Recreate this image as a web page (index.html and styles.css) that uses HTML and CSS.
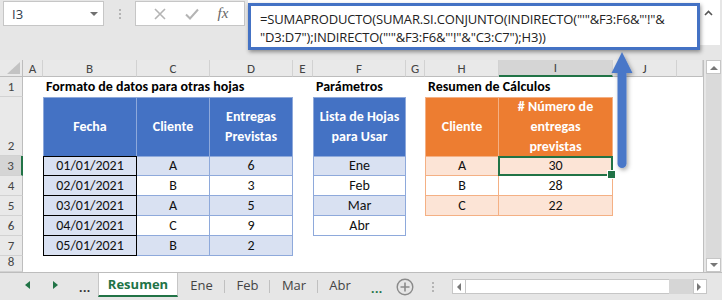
FILE: index.html
```html
<!DOCTYPE html>
<html lang="es">
<head>
<meta charset="utf-8">
<title>Excel - Resumen</title>
<link rel="stylesheet" href="styles.css">
</head>
<body>
<div class="fbar">
  <div class="namebox"><span>I3</span><i class="caret"></i></div>
  <div class="vdots"><i></i><i></i><i></i></div>
  <div class="fxbox">
    <svg width="12" height="12" viewBox="0 0 12 12"><path d="M1 1L11 11M11 1L1 11" stroke="#b4b4b4" stroke-width="1.6" fill="none"/></svg>
    <svg width="14" height="12" viewBox="0 0 14 12"><path d="M1 6.5L5 10.5L13 1.5" stroke="#b4b4b4" stroke-width="2" fill="none"/></svg>
    <span class="fx">fx</span>
  </div>
  <div class="formula">
    <div class="hl">=SUMAPRODUCTO(SUMAR.SI.CONJUNTO(INDIRECTO("'"&amp;F3:F6&amp;"'!"&amp;<br>"D3:D7");INDIRECTO("'"&amp;F3:F6&amp;"'!"&amp;"C3:C7");H3))</div>
    <svg class="up" width="9" height="6" viewBox="0 0 9 6"><path d="M1 5L4.5 1.5L8 5" stroke="#555" stroke-width="1.6" fill="none"/></svg>
  </div>
</div>

<div class="main">
  <div class="sheet">
    <div class="corner"><i></i></div>
    <div class="ch">A</div><div class="ch">B</div><div class="ch">C</div><div class="ch">D</div><div class="ch">E</div><div class="ch">F</div><div class="ch">G</div><div class="ch">H</div><div class="ch hsel">I</div><div class="ch">J</div><div class="ch"></div>

    <div class="rh">1</div><div></div><div class="title">Formato de datos para otras hojas</div><div></div><div></div><div></div><div class="title">Parámetros</div><div></div><div class="title">Resumen de Cálculos</div><div></div><div></div><div></div>

    <div class="rh">2</div><div></div>
    <div class="cell blue hd l">Fecha</div>
    <div class="cell blue hd">Cliente</div>
    <div class="cell blue hd">Entregas<br>Previstas</div>
    <div></div>
    <div class="cell blue hd l">Lista de Hojas<br>para Usar</div>
    <div></div>
    <div class="cell org hd l">Cliente</div>
    <div class="cell org hd"># Número de<br>entregas<br>previstas</div>
    <div></div><div></div>

    <div class="rh rsel">3</div><div></div>
    <div class="cell date first">01/01/2021</div>
    <div class="cell blue f tp">A</div>
    <div class="cell blue f tp">6</div>
    <div></div>
    <div class="cell blue f l tp">Ene</div>
    <div></div>
    <div class="cell org f l tp">A</div>
    <div class="cell org f tp sel">30</div>
    <div></div><div></div>

    <div class="rh">4</div><div></div>
    <div class="cell date">02/01/2021</div>
    <div class="cell blue">B</div>
    <div class="cell blue">3</div>
    <div></div>
    <div class="cell blue l">Feb</div>
    <div></div>
    <div class="cell org l">B</div>
    <div class="cell org">28</div>
    <div></div><div></div>

    <div class="rh">5</div><div></div>
    <div class="cell date">03/01/2021</div>
    <div class="cell blue f">A</div>
    <div class="cell blue f">5</div>
    <div></div>
    <div class="cell blue f l">Mar</div>
    <div></div>
    <div class="cell org f l">C</div>
    <div class="cell org f">22</div>
    <div></div><div></div>

    <div class="rh">6</div><div></div>
    <div class="cell date">04/01/2021</div>
    <div class="cell blue">C</div>
    <div class="cell blue">9</div>
    <div></div>
    <div class="cell blue l">Abr</div>
    <div></div><div></div><div></div><div></div><div></div>

    <div class="rh">7</div><div></div>
    <div class="cell date">05/01/2021</div>
    <div class="cell blue f">B</div>
    <div class="cell blue f">2</div>
    <div></div><div></div><div></div><div></div><div></div><div></div><div></div>

    <div class="rh">8</div><div></div><div></div><div></div><div></div><div></div><div></div><div></div><div></div><div></div><div></div><div></div>
  </div>
  <div class="vscroll">
    <div class="sbtn"><svg width="8" height="5" viewBox="0 0 8 5"><path d="M0 5L4 1L8 5Z" fill="#777"/></svg></div>
    <div class="strack"></div>
    <div class="sbtn"><svg width="8" height="5" viewBox="0 0 8 5"><path d="M0 0L4 4L8 0Z" fill="#777"/></svg></div>
  </div>
</div>

<div class="tabs">
  <div class="nav">
    <svg class="nl" width="5" height="8" viewBox="0 0 5 8"><path d="M5 0L0 4L5 8Z" fill="#217346"/></svg>
    <svg class="nr" width="5" height="8" viewBox="0 0 5 8"><path d="M0 0L5 4L0 8Z" fill="#217346"/></svg>
    <span class="more dark">...</span>
  </div>
  <div class="tab active">Resumen</div>
  <div class="tab w47 sep">Ene</div>
  <div class="tab w45 sep">Feb</div>
  <div class="tab w48 sep">Mar</div>
  <div class="tab w44">Abr</div>
  <span class="more green">...</span>
  <svg class="plus" width="18" height="18" viewBox="0 0 18 18"><circle cx="9" cy="9" r="7.8" stroke="#8a8a8a" stroke-width="1.4" fill="none"/><path d="M9 4.5V13.5M4.5 9H13.5" stroke="#8a8a8a" stroke-width="1.6"/></svg>
  <div class="vdots tabdots"><i></i><i></i><i></i></div>
  <div class="hscroll">
    <div class="hbtn"><svg width="5" height="8" viewBox="0 0 5 8"><path d="M5 0L1 4L5 8Z" fill="#777"/></svg></div>
    <div class="thumb"></div>
    <div class="htrack"></div>
    <div class="hbtn"><svg width="5" height="8" viewBox="0 0 5 8"><path d="M0 0L4 4L0 8Z" fill="#777"/></svg></div>
  </div>
</div>

<svg class="arrow" width="40" height="130" viewBox="0 0 40 130">
  <defs><filter id="sh" x="-50%" y="-20%" width="200%" height="140%"><feDropShadow dx="1.5" dy="2" stdDeviation="2" flood-color="#000" flood-opacity="0.35"/></filter></defs>
  <g filter="url(#sh)" fill="#4a77c8">
    <path d="M22 4L32.5 25H11.5Z"/>
    <path d="M17.5 24H26.5V115.5A4.5 4.5 0 0 1 17.5 115.5Z"/>
  </g>
</svg>
</body>
</html>
```

FILE: styles.css
```css
* { box-sizing: border-box; }
html, body { margin: 0; padding: 0; }
body {
  width: 722px;
  height: 300px;
  overflow: hidden;
  position: relative;
  background: #e6e6e6;
  font-family: "Open Sans", "Liberation Sans", sans-serif;
  color: #222;
}

/* formula bar */
.fbar { display: flex; align-items: flex-start; height: 60px; }
.namebox {
  margin: 1px 0 0 3px; width: 101px; height: 25px;
  background: #fff; border: 1px solid #c6c6c6;
  display: flex; align-items: center; justify-content: space-between;
  padding: 0 5px 0 8px; font-size: 13px; color: #2f3b4c;
}
.caret { border-left: 4px solid transparent; border-right: 4px solid transparent; border-top: 4px solid #707070; }
.vdots { width: 31px; display: flex; flex-direction: column; align-items: center; gap: 2px; padding-top: 9px; }
.vdots i { width: 2px; height: 2px; background: #b4b4b4; display: block; }
.fxbox {
  margin-top: 1px; width: 110px; height: 25px; background: #fff; border: 1px solid #c6c6c6;
  display: flex; align-items: center; justify-content: space-around; padding: 0 6px 0 8px;
}
.fx { font-family: "Liberation Serif", serif; font-style: italic; font-size: 15px; color: #666; }
.formula { margin-left: 3px; width: 472px; height: 45px; background: #fff; position: relative; }
.formula .hl {
  position: absolute; left: 0; top: 3px; width: 452px; height: 47px; z-index: 2;
  border: 3px solid #4472c4; background: #fff;
  box-shadow: 1px 2px 4px rgba(0,0,0,0.4);
  padding: 4px 0 0 9px; font-size: 13px; line-height: 18px; white-space: nowrap; color: #222;
  font-family: "Open Sans", "Liberation Sans", sans-serif; letter-spacing: -0.15px;
}
.formula .up { position: absolute; right: 7px; top: 10px; }

/* sheet */
.main { display: flex; height: 212px; }
.sheet {
  width: 704px; height: 212px; background: #fff; border-right: 1px solid #bfbfbf;
  display: grid;
  grid-template-columns: 23px 20px 94px 73px 83px 20px 93px 19px 74px 114px 64px 26px;
  grid-template-rows: 17px 20px 59px 20px 20px 20px 20px 20px 16px;
  font-family: "Carlito", "Lato", sans-serif; font-size: 14px;
}
.corner { background: #e9e9e9; border-right: 1px solid #bdbdbd; border-bottom: 1px solid #bdbdbd; position: relative; }
.corner i { position: absolute; right: 2px; bottom: 2px; width: 0; height: 0; border-left: 13px solid transparent; border-bottom: 12px solid #c3c3c3; }
.ch {
  background: #e9e9e9; border-right: 1px solid #d2d2d2; border-bottom: 1px solid #bdbdbd;
  display: flex; align-items: center; justify-content: center; font-size: 13px; color: #444;
}
.hsel { background: #d5d5d5; border-bottom: 2px solid #217346; }
.rh {
  background: #e9e9e9; border-right: 1px solid #bdbdbd; border-bottom: 1px solid #d2d2d2;
  display: flex; align-items: flex-end; justify-content: center; font-size: 13px; color: #444; line-height: 18px;
}
.rsel { background: #d5d5d5; border-right: 2px solid #217346; }
.title {
  white-space: nowrap; font-weight: 700; display: flex; align-items: flex-end;
  padding: 0 0 1px 3px; color: #000; line-height: 18px;
}
.cell {
  display: flex; align-items: center; justify-content: center; text-align: center;
  line-height: 20px; color: #111;
  border-right: 1px solid var(--bc); border-bottom: 1px solid var(--bc);
}
.blue { --bc: #8ea9db; }
.org { --bc: #f4b084; }
.cell.l { border-left: 1px solid var(--bc); }
.cell.tp { border-top: 1px solid var(--bc); }
.cell.hd { border-top: 1px solid var(--bc); border-bottom: none; font-weight: 700; color: #fff; }
.blue.hd { background: #4472c4; }
.org.hd { background: #ed7d31; }
.blue.f { background: #d9e1f2; }
.org.f { background: #fce4d6; }
.cell.date { border: 1px solid #000; border-top: none; background: #d9e1f2; }
.cell.date.first { border-top: 1px solid #000; }
.sel { position: relative; }
.sel::after {
  content: ""; position: absolute; left: -1px; top: -1px; right: -1px; bottom: -1px;
  border: 2px solid #217346;
}
.sel::before {
  content: ""; position: absolute; right: -4px; bottom: -4px; width: 7px; height: 7px; z-index: 1;
  background: #217346; border: 1px solid #fff;
}

.vscroll { margin-left: 2px; width: 15px; display: flex; flex-direction: column; }
.sbtn { height: 14px; background: #fff; border: 1px solid #c6c6c6; display: flex; align-items: center; justify-content: center; }
.strack { flex: 1; background: #dadada; }

/* tabs */
.tabs {
  display: flex; align-items: flex-start; height: 28px; border-top: 1px solid #bdbdbd;
  font-family: "Open Sans", "Liberation Sans", sans-serif; font-size: 13px; color: #444;
}
.nav { width: 98px; height: 24px; display: flex; align-items: center; }
.nav .nl { margin-left: 25px; }
.nav .nr { margin-left: 23px; }
.more { font-weight: 700; letter-spacing: 0.5px; font-size: 12px; }
.more.dark { margin-left: 21px; color: #333; padding-top: 4px; }
.more.green { margin: 7px 0 0 9px; color: #217346; }
.tab { height: 24px; display: flex; align-items: center; justify-content: center; position: relative; }
.tab.active {
  width: 80px; background: #fff; color: #217346; font-weight: 700;
  border-left: 1px solid #c6c6c6; border-right: 1px solid #c6c6c6; border-bottom: 2px solid #217346;
}
.tab.sep::after { content: ""; position: absolute; right: 0; top: 7px; height: 13px; width: 1px; background: #c0c0c0; }
.w47 { width: 47px; } .w45 { width: 45px; } .w48 { width: 48px; } .w44 { width: 44px; }
.plus { margin: 5px 0 0 13px; }
.tabdots { width: 38px; padding-top: 9px; }
.hscroll { margin-top: 6px; width: 255px; height: 15px; display: flex; }
.hbtn { width: 14px; background: #fff; border: 1px solid #c6c6c6; display: flex; align-items: center; justify-content: center; }
.thumb { width: 203px; background: #fff; border-top: 1px solid #c6c6c6; border-bottom: 1px solid #c6c6c6; }
.htrack { flex: 1; background: #d6d6d6; }

.arrow { position: absolute; left: 600px; top: 48px; z-index: 5; }
```
